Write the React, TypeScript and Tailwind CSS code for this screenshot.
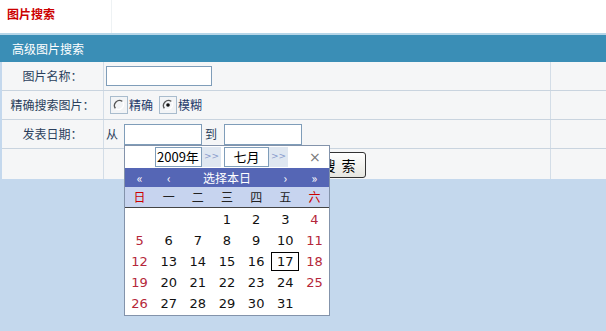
import React from "react";

const cjk = { fontFamily: '"Noto Sans CJK SC", "Noto Sans", sans-serif' };
const num = { fontFamily: '"DejaVu Sans", "Noto Sans CJK SC", sans-serif' };

function RadioBox({ checked }: { checked: boolean }) {
  return (
    <span className="inline-flex h-[18px] w-[18px] items-center justify-center border border-[#a9bccd] bg-[#f2f4f6]">
      <svg width="12" height="12" viewBox="0 0 12 12">
        <path d="M9.5 2.5 A5 5 0 0 0 2.5 9.5" fill="none" stroke="#555" strokeWidth="1.3" />
        <path d="M2.5 9.5 A5 5 0 0 0 9.5 2.5" fill="none" stroke="#fff" strokeWidth="1.3" />
        {checked && <circle cx="6" cy="6" r="1.8" fill="#111" />}
      </svg>
    </span>
  );
}

const weeks: (number | null)[][] = [
  [null, null, null, 1, 2, 3, 4],
  [5, 6, 7, 8, 9, 10, 11],
  [12, 13, 14, 15, 16, 17, 18],
  [19, 20, 21, 22, 23, 24, 25],
  [26, 27, 28, 29, 30, 31, null],
];

function Calendar() {
  return (
    <div className="absolute left-[124px] top-[145px] w-[206px] border border-[#8393ab] bg-white">
      <div className="flex h-[22px] items-center">
        <div className="ml-[30px] flex h-[20px] w-[47px] items-center border border-[#7f9db9] pl-[1px] text-[13px] text-black" style={cjk}>
          2009年
        </div>
        <div className="flex h-[20px] w-[19px] items-center justify-center bg-[#dfe7f1] text-[9px] text-[#8a9ccc]" style={num}>&gt;&gt;</div>
        <div className="ml-[3px] flex h-[20px] w-[45px] items-center justify-center border border-[#7f9db9] text-[13px] text-black" style={cjk}>
          七月
        </div>
        <div className="flex h-[20px] w-[19px] items-center justify-center bg-[#dfe7f1] text-[9px] text-[#8a9ccc]" style={num}>&gt;&gt;</div>
        <div className="ml-[21px] text-[14px] text-[#777]" style={num}>×</div>
      </div>
      <div className="grid h-[19px] grid-cols-7 items-center bg-[#5566b5] text-[12px] text-white" style={cjk}>
        <span className="text-center">«</span>
        <span className="text-center">‹</span>
        <span className="col-span-3 text-center text-[12px]">选择本日</span>
        <span className="text-center">›</span>
        <span className="text-center">»</span>
      </div>
      <div className="grid h-[21px] grid-cols-7 items-center border-b border-[#444] bg-[#c7d4ef] text-[12px] text-[#222]" style={cjk}>
        {["日", "一", "二", "三", "四", "五", "六"].map((d, i) => (
          <span key={d} className={`text-center ${i === 0 || i === 6 ? "text-[#cc0000]" : ""}`}>{d}</span>
        ))}
      </div>
      <div className="pb-[1px] pt-[1px]">
        {weeks.map((w, ri) => (
          <div key={ri} className="grid h-[21px] grid-cols-7 items-center text-[13px]" style={num}>
            {w.map((d, ci) => (
              <span key={ci} className="flex justify-center">
                {d !== null && (
                  <span
                    className={`flex h-[19px] items-center justify-center ${d === 17 ? "w-[28px] border border-black" : ""} ${
                      ci === 0 || ci === 6 ? "text-[#b5273a]" : "text-[#111]"
                    }`}
                  >
                    {d}
                  </span>
                )}
              </span>
            ))}
          </div>
        ))}
      </div>
    </div>
  );
}

function Row({ label, children }: { label: string; children?: React.ReactNode }) {
  return (
    <div className="flex h-[29px] border-b border-[#c9d4df]">
      <div className="flex w-[102px] items-center justify-center border-r border-[#d3dde7] text-[12px] text-[#2a3f5c]" style={cjk}>
        {label}
      </div>
      <div className="flex w-[447px] items-center border-r border-[#d3dde7]">{children}</div>
      <div className="flex-1" />
    </div>
  );
}

export default function App() {
  return (
    <div className="relative h-[331px] w-[606px] overflow-hidden bg-[#c4d8ed]">
      <div className="flex h-[33px] bg-white">
        <div className="flex w-[112px] items-center border-r border-[#eef2f4] pb-[5px] pl-[7px] text-[12px] font-bold text-[#cc0000]" style={cjk}>
          图片搜索
        </div>
        <div className="flex-1" />
      </div>
      <div className="h-[2px] bg-[#b6d6e8]" />
      <div className="flex h-[27px] items-center bg-[#3a8eb6] pl-[12px] text-[12px] text-white" style={cjk}>
        高级图片搜索
      </div>
      <div className="ml-[2px] bg-[#f5f6f7]">
        <Row label="图片名称：">
          <div className="ml-[2px] h-[20px] w-[106px] border border-[#7f9db9] bg-white" />
        </Row>
        <Row label="精确搜索图片：">
          <div className="ml-[6px] flex items-center text-[12px] text-[#1f3b6b]" style={cjk}>
            <RadioBox checked={false} />
            <span className="ml-[1px]">精确</span>
            <span className="ml-[6px]"><RadioBox checked={true} /></span>
            <span className="ml-[1px]">模糊</span>
          </div>
        </Row>
        <Row label="发表日期：">
          <div className="ml-[2px] flex items-center text-[12px] text-[#2a3f5c]" style={cjk}>
            <span>从</span>
            <div className="ml-[6px] h-[21px] w-[78px] border border-[#7f9db9] bg-white" />
            <span className="ml-[3px]">到</span>
            <div className="ml-[7px] h-[21px] w-[78px] border border-[#7f9db9] bg-white" />
          </div>
        </Row>
        <div className="flex h-[30px]">
          <div className="w-[102px] border-r border-[#d3dde7]" />
          <div className="flex w-[447px] items-center border-r border-[#d3dde7]">
            <div
              className="ml-[205px] mt-[2px] flex h-[26px] w-[57px] items-center justify-center gap-[6px] rounded-[3px] border border-[#333] bg-gradient-to-b from-white to-[#e6e6e0] pl-[2px] text-[14px] text-black"
              style={cjk}
            >
              <span>搜</span>
              <span>索</span>
            </div>
          </div>
          <div className="flex-1" />
        </div>
      </div>
      <Calendar />
    </div>
  );
}
